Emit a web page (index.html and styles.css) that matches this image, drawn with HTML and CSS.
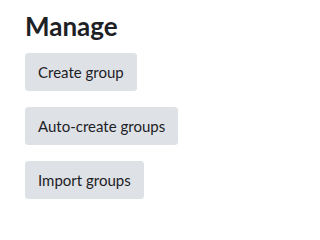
FILE: index.html
```html
<!DOCTYPE html>
<html>
<head>
<meta charset="utf-8">
<link rel="stylesheet" href="styles.css">
</head>
<body>
<div class="manage">
  <h3 class="title">Manage</h3>
  <div class="actions">
    <button class="btn">Create group</button>
    <button class="btn">Auto-create groups</button>
    <button class="btn">Import groups</button>
  </div>
</div>
</body>
</html>
```
FILE: styles.css
```css
html, body {
  margin: 0;
  padding: 0;
  background: #ffffff;
}
body {
  font-family: Lato, "Liberation Sans", sans-serif;
  color: #1d2125;
}
.manage {
  padding: 11px 0 0 25px;
}
.title {
  margin: 0 0 11px 0;
  font-size: 26px;
  font-weight: 700;
  line-height: 31px;
  color: #1d2125;
}
.actions {
  display: flex;
  flex-direction: column;
  align-items: flex-start;
  gap: 16px;
}
.btn {
  font-family: inherit;
  font-size: 15px;
  line-height: 22px;
  color: #1d2125;
  background: #dee2e6;
  border: 1px solid #dee2e6;
  border-radius: 3px;
  padding: 7px 12px;
  margin: 0;
}
```
